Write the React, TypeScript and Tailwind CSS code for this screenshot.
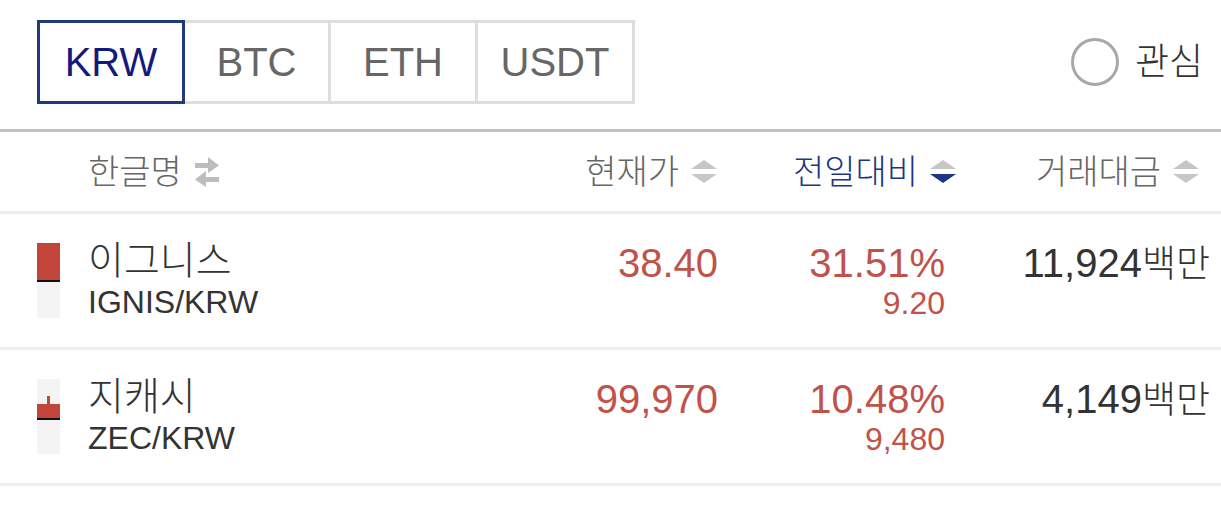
import React from "react";

type Coin = {
  name: string;
  pair: string;
  price: string;
  rate: string;
  diff: string;
  volume: string;
  candle: "full" | "small";
};

const coins: Coin[] = [
  { name: "이그니스", pair: "IGNIS/KRW", price: "38.40", rate: "31.51%", diff: "9.20", volume: "11,924", candle: "full" },
  { name: "지캐시", pair: "ZEC/KRW", price: "99,970", rate: "10.48%", diff: "9,480", volume: "4,149", candle: "small" },
];

function SortIcon({ active }: { active?: boolean }) {
  return (
    <svg width="28" height="28" viewBox="0 0 28 28" className="shrink-0">
      <path d="M1 11 L14 2 L27 11 Z" fill="#c6c6c6" />
      <path d="M1 16 L27 16 L14 25 Z" fill={active ? "#1c3586" : "#c6c6c6"} />
    </svg>
  );
}

function SwapIcon() {
  return (
    <svg width="26" height="32" viewBox="0 0 26 32" className="shrink-0">
      <rect x="1" y="7" width="14" height="5" fill="#bdbdbd" />
      <path d="M14 1 L25 9.5 L14 17 Z" fill="#bdbdbd" />
      <rect x="11" y="21" width="14" height="5" fill="#bdbdbd" />
      <path d="M12 15 L1 23.5 L12 31 Z" fill="#bdbdbd" />
    </svg>
  );
}

function Candle({ kind }: { kind: Coin["candle"] }) {
  return (
    <div className="flex h-[75px] w-[23px] flex-col bg-[#f4f4f4]">
      {kind === "full" ? (
        <div className="h-[39px] w-full border-b-[2px] border-[#111] bg-[#c2443a]" />
      ) : (
        <>
          <div className="mt-[17px] ml-[10px] h-[8px] w-[3px] bg-[#c2443a]" />
          <div className="h-[16px] w-full border-b-[2px] border-[#111] bg-[#c2443a]" />
        </>
      )}
    </div>
  );
}

export default function App() {
  return (
    <div className="h-[505px] w-[1221px] bg-white font-['Liberation_Sans','Noto_Sans_CJK_KR',sans-serif] text-[#333]">
      {/* Market tabs + favourite toggle */}
      <div className="flex h-[129px] items-start justify-between pt-[20px] pl-[37px] pr-[18px]">
        <div className="flex h-[84px] text-[40px] leading-none">
          <div className="flex w-[148px] items-center justify-center border-[3px] border-[#1f3a7e] text-[#14197c]">KRW</div>
          <div className="flex w-[146px] items-center justify-center border-y-[3px] border-r-[3px] border-[#dedede] text-[#666]">BTC</div>
          <div className="flex w-[147px] items-center justify-center border-y-[3px] border-r-[3px] border-[#dedede] text-[#666]">ETH</div>
          <div className="flex w-[157px] items-center justify-center border-y-[3px] border-r-[3px] border-[#dedede] text-[#666]">USDT</div>
        </div>
        <div className="flex h-[84px] items-center gap-[16px]">
          <div className="h-[48px] w-[48px] rounded-full border-[3px] border-[#a8a8a8]" />
          <span className="text-[37px] font-light leading-none text-[#333]">관심</span>
        </div>
      </div>

      <div className="h-[3px] bg-[#c2c2c2]" />

      {/* Column headers */}
      <div className="flex h-[82px] items-center border-b-[3px] border-[#ececec] text-[34px] font-light leading-none text-[#666]">
        <div className="flex flex-1 items-center gap-[12px] pl-[88px]">
          <span>한글명</span>
          <SwapIcon />
        </div>
        <div className="flex w-[158px] items-center justify-end gap-[11px]">
          <span>현재가</span>
          <SortIcon />
        </div>
        <div className="flex w-[239px] items-center justify-end gap-[11px] text-[#1c3586]">
          <span>전일대비</span>
          <SortIcon active />
        </div>
        <div className="flex w-[243px] items-center justify-end gap-[11px]">
          <span>거래대금</span>
          <SortIcon />
        </div>
        <div className="w-[21px]" />
      </div>

      {/* Rows */}
      {coins.map((c) => (
        <div key={c.pair} className="flex h-[136px] items-start border-b-[3px] border-[#eeeeee] pl-[37px] pr-[11px]">
          <div className="mt-[29px] mr-[28px]">
            <Candle kind={c.candle} />
          </div>
          <div className="flex flex-1 flex-col pt-[24px]">
            <span className="text-[39px] font-light leading-[46px] text-[#333]">{c.name}</span>
            <span className="text-[32px] leading-[36px] text-[#333]">{c.pair}</span>
          </div>
          <div className="w-[158px] pt-[27px] text-right text-[40px] leading-[44px] text-[#c1524a]">{c.price}</div>
          <div className="flex w-[227px] flex-col items-end pt-[27px] text-[#c1524a]">
            <span className="text-[40px] leading-[44px]">{c.rate}</span>
            <span className="text-[32px] leading-[36px]">{c.diff}</span>
          </div>
          <div className="w-[265px] pt-[27px] text-right text-[40px] leading-[44px] text-[#333]">
            {c.volume}
            <span className="text-[37px] font-light">백만</span>
          </div>
        </div>
      ))}
    </div>
  );
}
